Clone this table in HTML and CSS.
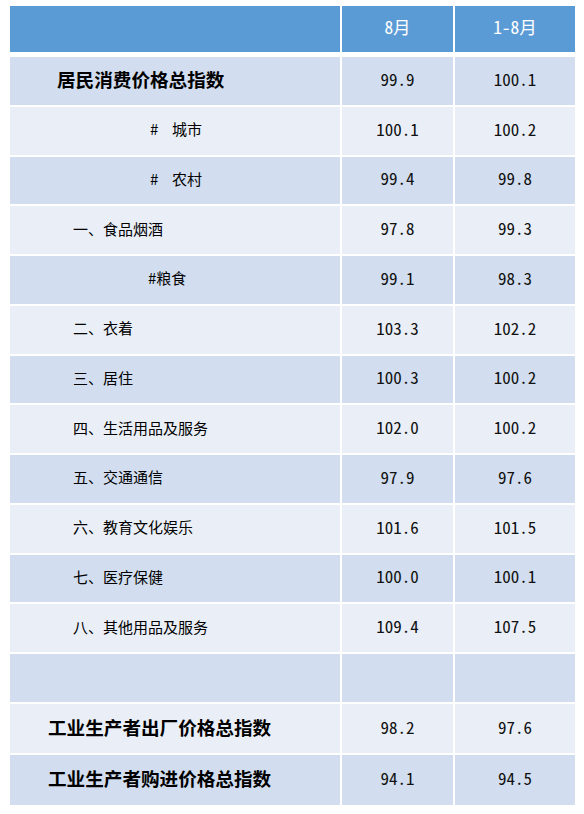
FILE: index.html
```html
<!DOCTYPE html>
<html lang="zh-CN">
<head>
<meta charset="utf-8">
<title>价格指数</title>
<link rel="stylesheet" href="styles.css">
</head>
<body>
<table class="idx">
  <colgroup>
    <col class="c-name">
    <col class="c-m">
    <col class="c-ytd">
  </colgroup>
  <thead>
    <tr>
      <th></th>
      <th class="num">8月</th>
      <th class="num">1-8月</th>
    </tr>
  </thead>
  <tbody>
    <tr class="dark"><td class="name main">居民消费价格总指数</td><td class="num">99.9</td><td class="num">100.1</td></tr>
    <tr class="light"><td class="name sub"><span class="hash">#</span>城市</td><td class="num">100.1</td><td class="num">100.2</td></tr>
    <tr class="dark"><td class="name sub"><span class="hash">#</span>农村</td><td class="num">99.4</td><td class="num">99.8</td></tr>
    <tr class="light"><td class="name item">一、食品烟酒</td><td class="num">97.8</td><td class="num">99.3</td></tr>
    <tr class="dark"><td class="name sub2">#粮食</td><td class="num">99.1</td><td class="num">98.3</td></tr>
    <tr class="light"><td class="name item">二、衣着</td><td class="num">103.3</td><td class="num">102.2</td></tr>
    <tr class="dark"><td class="name item">三、居住</td><td class="num">100.3</td><td class="num">100.2</td></tr>
    <tr class="light"><td class="name item">四、生活用品及服务</td><td class="num">102.0</td><td class="num">100.2</td></tr>
    <tr class="dark"><td class="name item">五、交通通信</td><td class="num">97.9</td><td class="num">97.6</td></tr>
    <tr class="light"><td class="name item">六、教育文化娱乐</td><td class="num">101.6</td><td class="num">101.5</td></tr>
    <tr class="dark"><td class="name item">七、医疗保健</td><td class="num">100.0</td><td class="num">100.1</td></tr>
    <tr class="light"><td class="name item">八、其他用品及服务</td><td class="num">109.4</td><td class="num">107.5</td></tr>
    <tr class="dark"><td class="name"></td><td class="num"></td><td class="num"></td></tr>
    <tr class="light tall"><td class="name ind">工业生产者出厂价格总指数</td><td class="num">98.2</td><td class="num">97.6</td></tr>
    <tr class="dark tall"><td class="name ind">工业生产者购进价格总指数</td><td class="num">94.1</td><td class="num">94.5</td></tr>
  </tbody>
</table>
</body>
</html>
```

FILE: styles.css
```css
html, body {
  margin: 0;
  padding: 0;
  background: #ffffff;
}

body {
  font-family: "Noto Sans CJK SC", "Noto Sans", sans-serif;
  color: #000000;
}

.idx {
  margin: 4px 0 0 8px;
  width: 569px;
  table-layout: fixed;
  border-collapse: separate;
  border-spacing: 2px;
}

.c-name { width: 330px; }
.c-m { width: 111px; }
.c-ytd { width: 120px; }

.idx th {
  box-sizing: border-box;
  height: 49px;
  padding: 0 0 5px;
  background: #5b9bd5;
  color: #ffffff;
  font-weight: 400;
  font-size: 17.5px;
  border-bottom: 3px solid #ffffff;
}

.idx td {
  box-sizing: border-box;
  height: 47.75px;
  padding: 0 0 5px;
  vertical-align: middle;
}

.idx tr.tall td { height: 49.5px; }

.dark td { background: #d2deef; }
.light td { background: #eaeff7; }

.num {
  text-align: center;
  font-family: "Noto Sans Mono CJK SC", "Noto Sans CJK SC", monospace;
  font-size: 17px;
  color: #111111;
}

.name {
  text-align: left;
  font-size: 15px;
  white-space: nowrap;
}

.idx td.item,
.idx td.sub,
.idx td.sub2 {
  padding-bottom: 4px;
}

.idx td.main {
  padding-left: 47px;
  font-size: 18.6px;
  font-weight: 700;
}

.idx td.ind {
  padding-left: 38px;
  font-size: 18.6px;
  font-weight: 700;
}

.idx td.item { padding-left: 63px; }
.idx td.sub { padding-left: 140px; }
.idx td.sub2 { padding-left: 138px; }

.hash {
  display: inline-block;
  width: 22px;
}
```
